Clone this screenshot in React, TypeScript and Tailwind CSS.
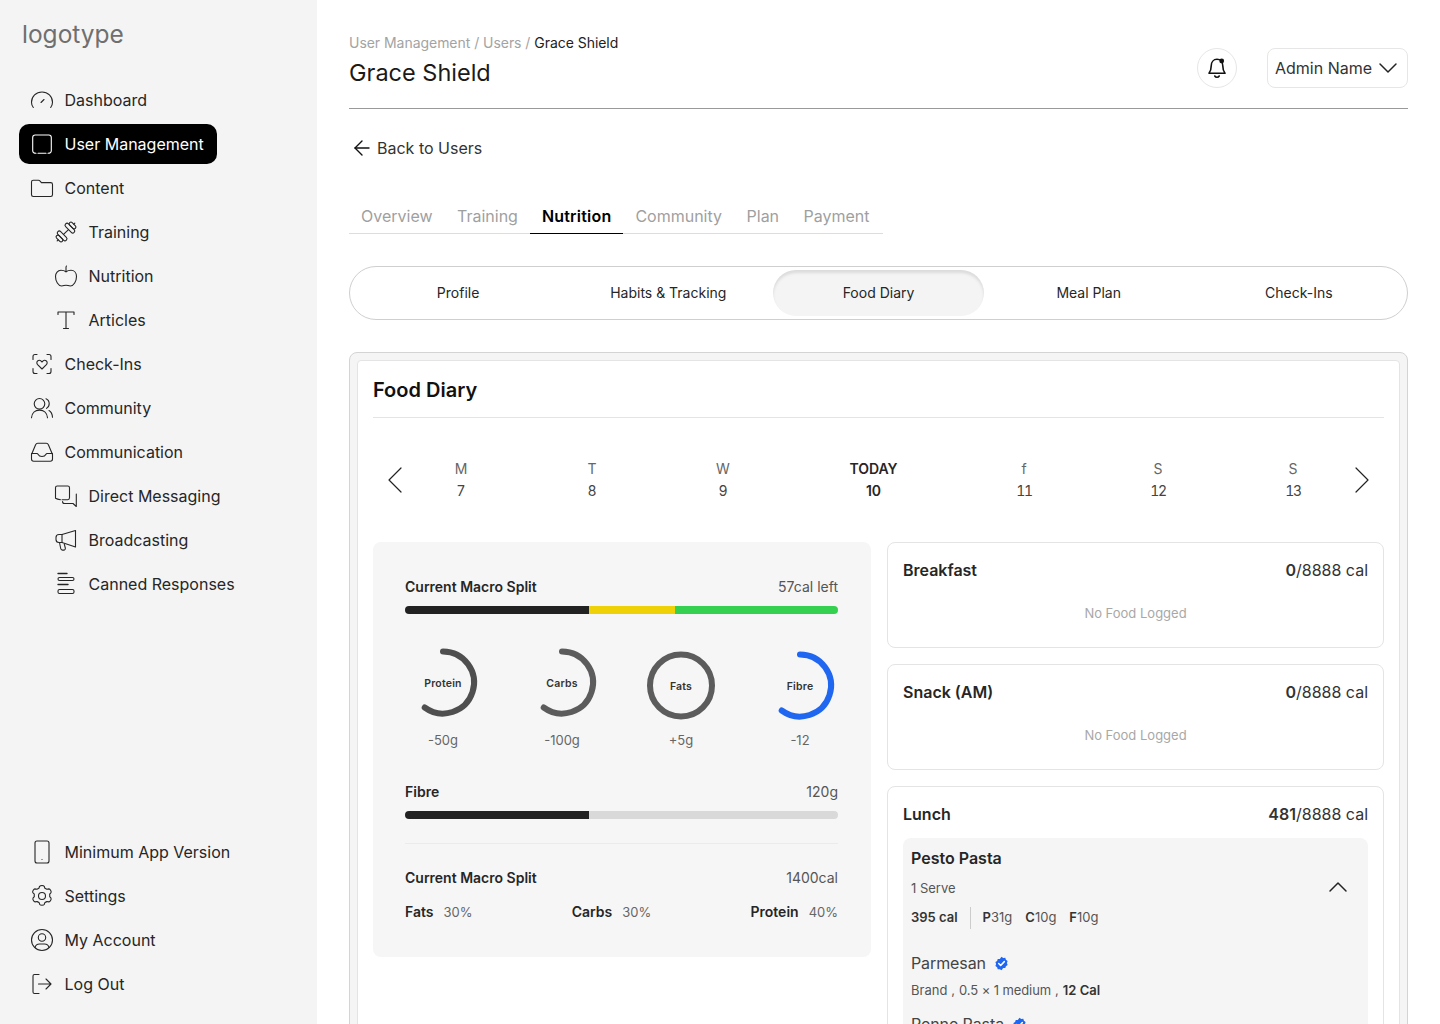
import React from "react";
import { ArrowLeft, ChevronLeft, ChevronRight, ChevronDown, ChevronUp } from "lucide-react";

type IconProps = { className?: string };
const Svg = ({ className, children }: { className?: string; children: React.ReactNode }) => (
  <svg viewBox="0 0 24 24" fill="none" stroke="currentColor" strokeWidth="1.1" strokeLinecap="round" strokeLinejoin="round" className={"h-6 w-6 shrink-0 " + (className ?? "")}>
    {children}
  </svg>
);

const Gauge = () => (
  <Svg>
    <path d="M3.3 19.5C1.9 17.9 1.500 16 1.500 14.200 1.500 8.400 6.200 4 12 4s10.500 4.400 10.500 10.200c0 1.800-.6 3.700-1.800 5.300" />
    <path d="M11 14.500l3-3" />
  </Svg>
);
const SquareI = () => (
  <Svg>
    <path d="M6 21.200c-2 0-3.300-.7-3.300-2.800V5.500c0-1.600 1-2.500 2.500-2.500h13.600c1.500 0 2.500.9 2.500 2.500v12.900c0 2.100-1.300 2.800-3.300 2.800" />
    <path d="M8 21.200h8" />
  </Svg>
);
const Folder = () => (
  <Svg>
    <path d="M1.500 6c0-1 .7-1.800 1.800-1.800h5.200c.6 0 1 .2 1.400.7l1.500 1.700h9.300c1 0 1.800.8 1.800 1.800v10.400c0 1-.8 1.700-1.800 1.700H3.300c-1 0-1.800-.7-1.800-1.700V6z" />
  </Svg>
);
const Dumbbell = () => (
  <Svg>
    <g transform="rotate(-45 12 12)">
      <path d="M8.500 12h7" />
      <rect x="4.500" y="6" width="4" height="12" rx="2" />
      <rect x="1" y="8" width="3.500" height="8" rx="1.700" />
      <path d="M1 12h-1.500" />
      <rect x="15.500" y="6" width="4" height="12" rx="2" />
      <rect x="19.500" y="8" width="3.500" height="8" rx="1.700" />
      <path d="M23 12h1.500" />
    </g>
  </Svg>
);
const Apple = () => (
  <Svg>
    <path d="M12 7.800c-1.500-1.100-3-1.500-5-1.500-3.200 0-5.500 2.500-5.500 6.200 0 4.700 2.800 9.500 6.200 9.500 1.800 0 2.700-.8 4.300-.8s2.500.8 4.300.8c3.400 0 6.200-4.800 6.200-9.500 0-3.700-2.300-6.200-5.500-6.200-2 0-3.500.4-5 1.500z" />
    <path d="M12 7.800V3.500c0-.5.100-1 .5-1.500" />
  </Svg>
);
const TypeI = () => (
  <Svg>
    <path d="M4 6.500V4h16v2.500M12 4v16.500M9.500 20.500h5" />
  </Svg>
);
const CheckIn = () => (
  <Svg>
    <path d="M3 7.500V4.500C3 3 3.800 2.500 5 2.500h2M17 2.500h2c1.200 0 2 .5 2 2v3M21 16.500v3c0 1.500-.8 2-2 2h-2M7 21.500H5c-1.200 0-2-.5-2-2v-3" />
    <path d="M12 17l-4.400-4.400c-1-1.100-1-2.700 0-3.600 1-.9 2.600-.8 3.600.2l.8.8.8-.8c1-1 2.600-1.100 3.600-.2 1 .9 1 2.500 0 3.600L12 17z" />
  </Svg>
);
const Users = () => (
  <Svg>
    <circle cx="9.500" cy="7.800" r="5.300" />
    <path d="M1.500 21.800c.3-4.700 3.600-7.700 8-7.700s7.700 3 8 7.700" />
    <path d="M16 2.800c2 .8 3.200 2.700 3.200 5 0 2-1 3.600-2.700 4.600M19 14.500c2 1.200 3.300 3.400 3.500 6.800" />
  </Svg>
);
const Inbox = () => (
  <Svg>
    <path d="M1.500 14.500V19c0 1.300.9 2.200 2.200 2.200h16.600c1.300 0 2.200-.9 2.200-2.200v-4.500L18.500 5c-.4-1-1.200-1.700-2.300-1.700H7.800C6.700 3.300 5.900 4 5.500 5L1.500 14.500z" />
    <path d="M1.500 13.500H7c.5 0 .8.300 1 .7.700 1.400 2.200 2.300 4 2.300s3.300-.9 4-2.300c.2-.4.500-.7 1-.7h5.500" />
  </Svg>
);
const Chat = () => (
  <Svg>
    <path d="M6.500 15.700c-1.800-.3-3.300-.6-5-1.500V3.800c0-1 .8-1.800 1.800-1.800h10.400c1 0 1.800.8 1.800 1.800v10c0 1-.8 1.900-1.800 1.900H8" />
    <path d="M8.500 17.500c0 1.300.7 2 2 2H19l3.300 3V10" />
  </Svg>
);
const Megaphone = () => (
  <Svg>
    <path d="M21.500 2.500v16.500L8 14.500H5c-2 0-3-1.200-3-3V9.500c0-1.700 1-3 3-3h3L21.500 2.500z" />
    <path d="M8 6.500v8M5.500 14.500l1.200 6c.2 1 .9 1.600 1.800 1.600h1.200c1.100 0 1.900-1 1.600-2.100l-1-3.800" />
  </Svg>
);
const Canned = () => (
  <Svg>
    <path d="M4 1.500h9" strokeWidth="1.400" />
    <rect x="4" y="5.500" width="16" height="3" rx="1.500" />
    <path d="M4 12.500h10" strokeWidth="1.400" />
    <rect x="4" y="17.500" width="16" height="4" rx="1.500" />
  </Svg>
);
const Phone = () => (
  <Svg>
    <rect x="5" y="1" width="14" height="22" rx="2" />
    <path d="M12 19.500h.01" />
  </Svg>
);
const Gear = () => (
  <Svg>
    <circle cx="12" cy="12" r="3.500" />
    <path d="M9.800 2.300c.6-1 3.800-1 4.400 0l.7 1.900c.8.300 1.300.6 2 1.100l2-.4c1.100-.1 2.700 2.700 2.100 3.700l-1.300 1.600c.1.900.1 1.500 0 2.400l1.300 1.600c.6 1-1 3.800-2.100 3.700l-2-.4c-.7.500-1.200.8-2 1.100l-.7 1.900c-.6 1-3.800 1-4.400 0l-.7-1.900c-.8-.3-1.300-.6-2-1.100l-2 .4c-1.100.1-2.700-2.700-2.100-3.700l1.300-1.600c-.1-.9-.1-1.500 0-2.400L2.800 8.600c-.6-1 1-3.800 2.100-3.700l2 .4c.7-.5 1.200-.8 2-1.100l.7-1.900z" />
  </Svg>
);
const Account = () => (
  <Svg>
    <circle cx="12" cy="12" r="10.500" />
    <circle cx="12" cy="9.500" r="3.700" />
    <path d="M5 19.500c.6-2.500 2.700-3.500 4.500-3.500h5c1.800 0 3.900 1 4.500 3.500" />
  </Svg>
);
const LogOut = () => (
  <Svg>
    <path d="M9 2.500H4.500C3.500 2.500 3 3 3 4v16c0 1 .5 1.500 1.500 1.500H9" />
    <path d="M8.500 12H21M16 7l5 5-5 5" />
  </Svg>
);
const Bell = () => (
  <svg viewBox="0 0 24 24" fill="none" stroke="#111" strokeWidth="1.600" strokeLinecap="round" strokeLinejoin="round" className="h-6 w-6">
    <path d="M6.200 10c0-3.800 2.400-6.700 5.800-6.700s5.800 2.900 5.800 6.700c0 4 .8 5.600 2.200 7.300H4c1.400-1.700 2.200-3.300 2.200-7.300z" />
    <path d="M9.800 20c.5.900 1.200 1.300 2.200 1.300s1.700-.4 2.200-1.300" />
    <circle cx="16.700" cy="5" r="2.400" fill="#111" stroke="none" />
  </svg>
);
const Verified = () => (
  <svg viewBox="0 0 16 16" className="h-[15px] w-[15px]">
    <path fill="#1f66f0" d="M8 .7l1.800 1.300 2.200-.1.700 2.100 1.800 1.300-.7 2.100.7 2.100-1.800 1.300-.7 2.100-2.200-.1L8 15.300l-1.800-1.300-2.200.1-.7-2.100-1.800-1.300.7-2.100-.7-2.100 1.800-1.300.7-2.100 2.200.1z" />
    <path d="M5 8l2.100 2.100L11 6" fill="none" stroke="#fff" strokeWidth="1.600" strokeLinecap="round" strokeLinejoin="round" />
  </svg>
);

type NavEntry = { label: string; icon: React.ComponentType<IconProps>; sub?: boolean; active?: boolean };
const topNav: NavEntry[] = [
  { label: "Dashboard", icon: Gauge },
  { label: "User Management", icon: SquareI, active: true },
  { label: "Content", icon: Folder },
  { label: "Training", icon: Dumbbell, sub: true },
  { label: "Nutrition", icon: Apple, sub: true },
  { label: "Articles", icon: TypeI, sub: true },
  { label: "Check-Ins", icon: CheckIn },
  { label: "Community", icon: Users },
  { label: "Communication", icon: Inbox },
  { label: "Direct Messaging", icon: Chat, sub: true },
  { label: "Broadcasting", icon: Megaphone, sub: true },
  { label: "Canned Responses", icon: Canned, sub: true },
];
const bottomNav: NavEntry[] = [
  { label: "Minimum App Version", icon: Phone },
  { label: "Settings", icon: Gear },
  { label: "My Account", icon: Account },
  { label: "Log Out", icon: LogOut },
];

const NavRow = ({ item }: { item: NavEntry }) => {
  const I = item.icon;
  return (
    <div
      className={
        "flex h-10 w-fit items-center gap-[11px] rounded-[10px] pr-[13px] text-[16px] leading-6 " +
        (item.sub ? "pl-[34.500px] " : "pl-[10.500px] ") +
        (item.active ? "bg-black text-white" : "text-[#262626]")
      }
    >
      <I />
      <span>{item.label}</span>
    </div>
  );
};

const Sidebar = () => (
  <aside className="flex h-full w-[317px] shrink-0 flex-col justify-between bg-[#f4f4f4] pb-5 pl-[19px]">
    <div>
      <div className="flex h-[80px] items-start pl-[3px] pt-[17px] text-[24.500px] leading-[34px] text-[#6f6f6f]">logotype</div>
      <nav className="flex flex-col gap-1">
        {topNav.map((n) => (
          <NavRow key={n.label} item={n} />
        ))}
      </nav>
    </div>
    <nav className="flex flex-col gap-1">
      {bottomNav.map((n) => (
        <NavRow key={n.label} item={n} />
      ))}
    </nav>
  </aside>
);

const Ring = ({ label, value, color, cy, mode }: { label: string; value: string; color: string; cy: number; mode: "arc" | "full" }) => (
  <div className="flex w-[76px] flex-col items-center">
    <div className="relative h-[80px] w-[76px]">
      <svg viewBox="0 0 76 80" className="h-[80px] w-[76px]" fill="none">
        {mode === "full" ? (
          <circle cx="38" cy={cy} r="31" stroke={color} strokeWidth="6" />
        ) : (
          <path d={`M38 ${cy - 31}A31 31 0 1 1 19.700 ${cy + 25}`} stroke={color} strokeWidth="6" strokeLinecap="round" />
        )}
      </svg>
      <div className="absolute left-0 w-full -translate-y-1/2 text-center text-[10.500px] font-semibold leading-4 tracking-[0.2px] text-[#333]" style={{ top: cy + 1 }}>
        {label}
      </div>
    </div>
    <div className="mt-[6px] text-[13px] leading-5 text-[#666]">{value}</div>
  </div>
);

const Bar = ({ children }: { children: React.ReactNode }) => <div className="flex h-2 w-full overflow-hidden rounded-full">{children}</div>;

const MealCard = ({ title, cal }: { title: string; cal: string }) => (
  <div className="h-[106px] rounded-lg border border-[#e4e4e4] bg-white px-[15px] pt-[15px]">
    <div className="flex items-center justify-between text-[16px] leading-6">
      <span className="font-semibold text-[#262626]">{title}</span>
      <span className="text-[#333]">
        <b className="font-semibold">{cal}</b>/8888 cal
      </span>
    </div>
    <div className="mt-[21px] text-center text-[13px] leading-5 text-[#a8a8a8]">No Food Logged</div>
  </div>
);

const days = [
  { d: "M", n: "7", w: "w-[13px]" },
  { d: "T", n: "8", w: "w-[9px]" },
  { d: "W", n: "9", w: "w-[13px]" },
  { d: "TODAY", n: "10", w: "w-[48px]" },
  { d: "f", n: "11", w: "w-[13px]" },
  { d: "S", n: "12", w: "w-[15px]" },
  { d: "S", n: "13", w: "w-[15px]" },
];

const SectionRow = ({ left, right }: { left: string; right: string }) => (
  <div className="box-border flex h-5 items-center justify-between pb-[2px] text-[14px]">
    <span className="font-semibold text-[#262626]">{left}</span>
    <span className="text-[#555]">{right}</span>
  </div>
);

const Macro = ({ name, pct }: { name: string; pct: string }) => (
  <span className="flex items-baseline gap-[10px]">
    <b className="text-[14px] font-semibold text-[#262626]">{name}</b>
    <span className="text-[13px]">{pct}</span>
  </span>
);

const App = () => (
  <div className="flex h-[1024px] w-[1440px] overflow-hidden bg-white font-['Inter',sans-serif]">
    <Sidebar />
    <main className="min-w-0 flex-1 pl-8 pr-8">
      <header className="flex h-[109px] justify-between border-b border-[#999] pt-[33px]">
        <div>
          <div className="text-[14px] leading-5 tracking-[-0.04px] text-[#a3a3a3]">
            User Management / Users / <span className="text-[#222]">Grace Shield</span>
          </div>
          <h1 className="mt-1 text-[23.500px] leading-8 text-[#1a1a1a]">Grace Shield</h1>
        </div>
        <div className="mt-[15px] flex h-10 items-center gap-[30px]">
          <div className="flex h-10 w-10 items-center justify-center rounded-full border border-[#e6e6e6]">
            <Bell />
          </div>
          <div className="flex h-10 w-[141px] items-center justify-between rounded-lg border border-[#e6e6e6] pl-[7px] pr-[3px] text-[16px] text-[#333]">
            <span className="whitespace-nowrap">Admin Name</span>
            <ChevronDown className="h-8 w-8 shrink-0" strokeWidth={1.1} color="#222" />
          </div>
        </div>
      </header>

      <div className="mt-[29px] flex h-5 items-center gap-[3px] pl-px text-[16px] text-[#333]">
        <ArrowLeft className="h-6 w-6" strokeWidth={1.4} color="#111" />
        <span>Back to Users</span>
      </div>

      <div className="mt-[42px] flex h-[34px] w-[534px] border-b border-[#ddd] text-[16px] leading-6 text-[#9f9f9f]">
        <div className="px-3 pt-[4px]">Overview</div>
        <div className="pl-[12.500px] pr-3 pt-[4px]">Training</div>
        <div className="-mb-px border-b border-black px-3 pt-[4px] font-semibold tracking-[0.2px] text-black">Nutrition</div>
        <div className="px-3 pt-[4px]">Community</div>
        <div className="px-[12.500px] pt-[4px]">Plan</div>
        <div className="px-3 pt-[4px]">Payment</div>
      </div>

      <div className="mt-8 grid h-[54px] grid-cols-5 items-center rounded-full border border-[#cfcfcf] px-[3px] text-[14px] text-[#262626]">
        <div className="pb-[2px] text-center">Profile</div>
        <div className="pb-[2px] text-center">Habits &amp; Tracking</div>
        <div className="flex h-[46px] items-center justify-center rounded-full bg-[#f4f4f4] pb-[2px] shadow-[inset_0_3px_3px_rgba(0,0,0,0.10)]">Food Diary</div>
        <div className="pb-[2px] text-center">Meal Plan</div>
        <div className="pb-[2px] text-center">Check-Ins</div>
      </div>

      <section className="mt-8 h-[700px] rounded-lg border border-[#d4d4d4] bg-[#f5f5f5] px-[7px] pt-[7px]">
        <div className="h-full rounded-[4px] border border-[#e4e4e4] bg-white px-[15px] pt-[15px]">
          <h2 className="border-b border-[#e4e4e4] pb-[13px] text-[20px] font-semibold leading-7 text-[#111]">Food Diary</h2>

          <div className="mt-[40px] flex h-[44px] items-center">
            <ChevronLeft className="-ml-[2px] h-12 w-12 shrink-0" strokeWidth={0.6} color="#222" />
            <div className="ml-[35.500px] flex gap-[120px] text-[14px] leading-[22px] text-[#666]">
              {days.map((x, i) => (
                <div key={i} className={"flex flex-col items-center whitespace-nowrap " + x.w + (x.d === "TODAY" ? " font-semibold text-[#262626]" : "")}>
                  <div>{x.d}</div>
                  <div className={x.d === "TODAY" ? "" : x.n.length > 1 ? "tracking-[-1.200px] text-[#444] tabular-nums" : "text-[#444]"}>{x.n}</div>
                </div>
              ))}
            </div>
            <ChevronRight className="ml-[37.500px] h-12 w-12 shrink-0" strokeWidth={0.6} color="#222" />
          </div>

          <div className="mt-[40px] grid grid-cols-[498px_497px] gap-4">
            <div className="h-[415px] rounded-lg bg-[#f6f6f6] pl-8 pr-[33px] pt-[35px]">
              <SectionRow left="Current Macro Split" right="57cal left" />
              <div className="mt-[9px]">
                <Bar>
                  <div className="w-[184px] bg-[#222]" />
                  <div className="w-[86px] bg-[#efd108]" />
                  <div className="flex-1 bg-[#35d04f]" />
                </Bar>
              </div>
              <div className="mt-[30px] flex justify-between">
                <Ring label="Protein" value="-50g" color="#4f4f4f" cy={38.5} mode="arc" />
                <Ring label="Carbs" value="-100g" color="#5c5c5c" cy={38.5} mode="arc" />
                <Ring label="Fats" value="+5g" color="#5c5c5c" cy={41.5} mode="full" />
                <Ring label="Fibre" value="-12" color="#1f66f0" cy={41.5} mode="arc" />
              </div>
              <div className="mt-[32px]">
                <SectionRow left="Fibre" right="120g" />
              </div>
              <div className="mt-[9px]">
                <Bar>
                  <div className="w-[184px] bg-[#222]" />
                  <div className="flex-1 bg-[#d9d9d9]" />
                </Bar>
              </div>
              <div className="mt-6 border-t border-[#ebebeb] pt-[24px]">
                <SectionRow left="Current Macro Split" right="1400cal" />
                <div className="mt-[15px] box-border flex h-5 items-center justify-between pb-[2px] text-[#666]">
                  <Macro name="Fats" pct="30%" />
                  <Macro name="Carbs" pct="30%" />
                  <Macro name="Protein" pct="40%" />
                </div>
              </div>
            </div>

            <div className="flex flex-col gap-4">
              <MealCard title="Breakfast" cal="0" />
              <MealCard title="Snack (AM)" cal="0" />
              <div className="rounded-lg border border-[#e4e4e4] bg-white px-[15px] pt-[15px]">
                <div className="flex items-center justify-between text-[16px] leading-6">
                  <span className="font-semibold text-[#262626]">Lunch</span>
                  <span className="text-[#333]">
                    <b className="font-semibold">481</b>/8888 cal
                  </span>
                </div>
                <div className="mt-[12px] rounded-lg bg-[#f5f5f5] px-2 pb-8 pt-2">
                  <div className="text-[16px] font-semibold leading-6 text-[#262626]">Pesto Pasta</div>
                  <div className="mt-[9px] flex h-5 items-center justify-between pr-[6px] text-[13px] text-[#555]">
                    <span>1 Serve</span>
                    <ChevronUp className="-my-[6px] h-8 w-8 -translate-y-[2px]" strokeWidth={1.1} color="#222" />
                  </div>
                  <div className="mt-[8px] flex h-[22px] items-center text-[13px] text-[#555]">
                    <b className="font-semibold text-[#333]">395 cal</b>
                    <span className="mx-3 h-[22px] w-px bg-[#ccc]" />
                    <span className="flex gap-[13px]">
                      <span><b className="font-semibold text-[#333]">P</b>31g</span>
                      <span><b className="font-semibold text-[#333]">C</b>10g</span>
                      <span><b className="font-semibold text-[#333]">F</b>10g</span>
                    </span>
                  </div>
                  <div className="mt-[22px] flex h-6 items-center gap-[8px] text-[16px] tracking-[-0.1px] text-[#444]">
                    Parmesan <Verified />
                  </div>
                  <div className="mt-[5px] flex h-5 gap-[4px] text-[13px] leading-5 text-[#555]">
                    <span>Brand</span>
                    <span>,</span>
                    <span className="tracking-[-0.1px]">0.5 × 1 medium</span>
                    <span>,</span>
                    <b className="font-semibold text-[#333]">12 Cal</b>
                  </div>
                  <div className="mt-[12px] flex h-6 items-center gap-[8px] text-[16px] tracking-[-0.1px] text-[#444]">
                    Penne Pasta <Verified />
                  </div>
                </div>
              </div>
            </div>
          </div>
        </div>
      </section>
    </main>
  </div>
);

export default App;
